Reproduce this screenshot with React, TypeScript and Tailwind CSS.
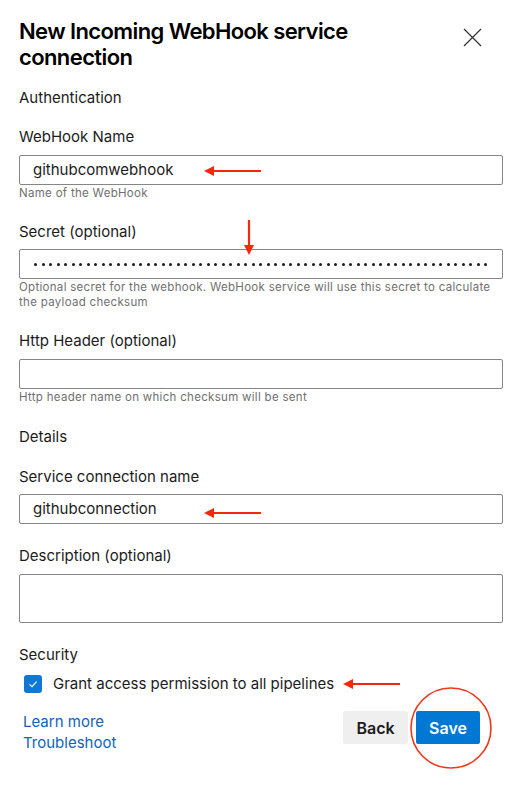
const font = { fontFamily: "Inter, 'Noto Sans', sans-serif" };

function Label({ children, className = "" }: { children: React.ReactNode; className?: string }) {
  return <div className={`text-[15px] leading-[20px] text-[#1b1b1b] ${className}`}>{children}</div>;
}

function Field({ value, dots, className = "" }: { value?: string; dots?: boolean; className?: string }) {
  return (
    <div
      className={`h-[30px] w-full rounded-[2px] border border-[#858585] bg-white flex items-center px-[13px] text-[15px] text-[#1b1b1b] ${className}`}
    >
      {dots ? (
        <div className="flex items-center gap-[4.5px] pt-[1px] pl-[1px]">
          {Array.from({ length: 61 }).map((_, i) => (
            <span key={i} className="w-[3px] h-[3px] rounded-full bg-[#1b1b1b]" />
          ))}
        </div>
      ) : (
        value
      )}
    </div>
  );
}

function Help({ children }: { children: React.ReactNode }) {
  return <div className="mt-[1px] text-[11.5px] leading-[15px] tracking-[0.3px] text-[#707070]">{children}</div>;
}

function Arrow({ x1, y1, x2, y2 }: { x1: number; y1: number; x2: number; y2: number }) {
  // x2,y2 is the tip
  const a = Math.atan2(y2 - y1, x2 - x1);
  const len = 10;
  const w = 5;
  const bx = x2 - Math.cos(a) * len;
  const by = y2 - Math.sin(a) * len;
  const px = -Math.sin(a) * w;
  const py = Math.cos(a) * w;
  return (
    <g>
      <line x1={x1} y1={y1} x2={bx} y2={by} stroke="#f2290f" strokeWidth={2.2} />
      <polygon points={`${x2},${y2} ${bx + px},${by + py} ${bx - px},${by - py}`} fill="#f2290f" />
    </g>
  );
}

export default function App() {
  return (
    <div className="relative w-[522px] h-[804px] bg-white px-[19px] overflow-hidden" style={font}>
      {/* Header */}
      <div className="flex items-start justify-between pt-[18px]">
        <h1 className="w-[420px] text-[22px] leading-[26px] font-semibold text-black tracking-[-0.6px]">
          New Incoming WebHook service connection
        </h1>
        <button className="mt-[10px] mr-[21px] text-[#333]">
          <svg width="19" height="19" viewBox="0 0 19 19">
            <path d="M1 1 L18 18 M18 1 L1 18" stroke="#333" strokeWidth="1.2" fill="none" />
          </svg>
        </button>
      </div>

      <Label className="mt-[18px]">Authentication</Label>

      <Label className="mt-[19px]">WebHook Name</Label>
      <Field className="mt-[8px]" value="githubcomwebhook" />
      <Help>Name of the WebHook</Help>

      <Label className="mt-[21px]">Secret (optional)</Label>
      <Field className="mt-[7px]" dots />
      <Help>
        Optional secret for the webhook. WebHook service will use this secret to calculate
        <br />
        the payload checksum
      </Help>

      <Label className="mt-[21px]">Http Header (optional)</Label>
      <Field className="mt-[8px]" />
      <Help>Http header name on which checksum will be sent</Help>

      <Label className="mt-[22px]">Details</Label>

      <Label className="mt-[20px]">Service connection name</Label>
      <Field className="mt-[7px]" value="githubconnection" />

      <Label className="mt-[22px]">Description (optional)</Label>
      <div className="mt-[8px] h-[49px] w-full rounded-[2px] border border-[#858585]" />

      <Label className="mt-[22px]">Security</Label>
      <div className="mt-[9px] h-[20px] flex items-center ml-[5px] gap-[11px]">
        <span className="w-[18px] h-[18px] rounded-[3px] bg-[#0f78d4] flex items-center justify-center">
          <svg width="12" height="12" viewBox="0 0 12 12">
            <path d="M2.5 6.3 L5 8.6 L9.6 3.6" fill="none" stroke="white" strokeWidth="1.1" />
          </svg>
        </span>
        <span className="text-[15px] text-[#1b1b1b]">Grant access permission to all pipelines</span>
      </div>

      <div className="mt-[17px] flex items-start justify-between">
        <div className="ml-[4px] flex flex-col text-[15px] leading-[21px] text-[#1064b6]">
          <a>Learn more</a>
          <a>Troubleshoot</a>
        </div>
        <div className="mr-[23px] flex gap-[8px]">
          <button className="h-[33px] w-[65px] rounded-[2px] bg-[#efefef] text-[16px] font-semibold text-[#1b1b1b]">
            Back
          </button>
          <button className="h-[33px] w-[64px] rounded-[2px] bg-[#0078d4] text-[16px] font-semibold text-white">
            Save
          </button>
        </div>
      </div>

      {/* Annotations */}
      <svg className="absolute inset-0 pointer-events-none" width="522" height="804">
        <Arrow x1={261} y1={171} x2={204} y2={171} />
        <Arrow x1={249} y1={220} x2={249} y2={255} />
        <Arrow x1={261} y1={513} x2={204} y2={513} />
        <Arrow x1={400} y1={684} x2={343} y2={684} />
        <circle cx={451} cy={728} r={40} fill="none" stroke="#f0371c" strokeWidth={1.6} />
      </svg>
    </div>
  );
}
